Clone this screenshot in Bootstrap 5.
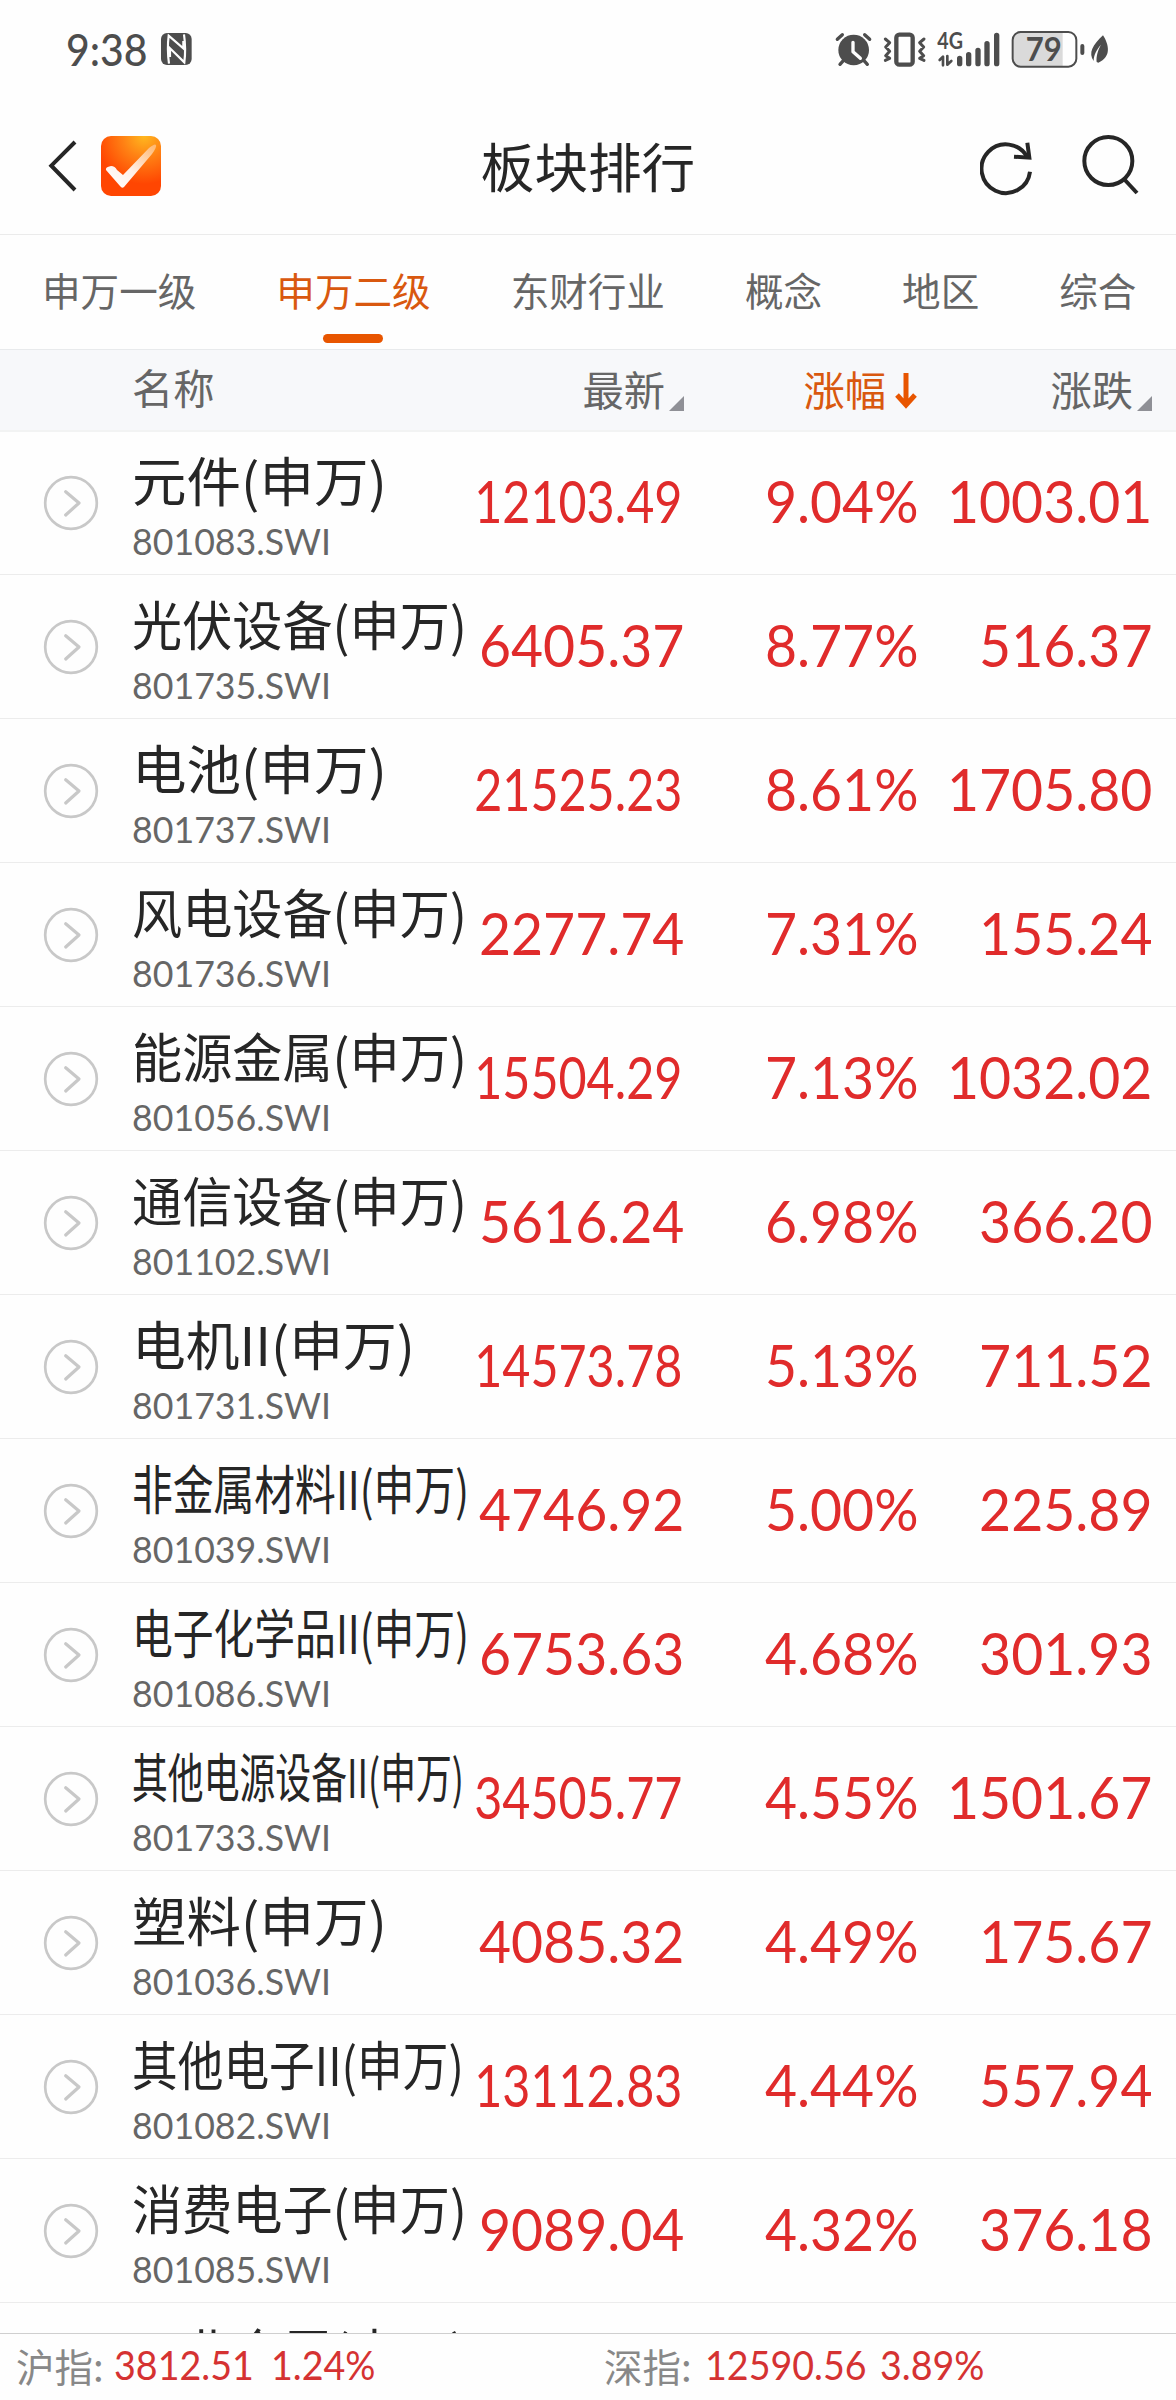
<!DOCTYPE html>
<html lang="zh-CN">
<head>
<meta charset="utf-8">
<meta name="viewport" content="width=device-width, initial-scale=1">
<title>板块排行</title>
<link href="https://cdn.jsdelivr.net/npm/bootstrap@5.3.0/dist/css/bootstrap.min.css" rel="stylesheet">
<style>
  body { background: #fefefe; color: #262626; font-family: "Noto Sans CJK SC", sans-serif; }
  .screen { width: 1176px; height: 2400px; }
  .numeric { font-family: Lato, "Noto Sans", sans-serif; white-space: nowrap; }
  .statusbar { height: 98px; padding: 0 63px 0 66px; color: #4d4d4d; }
  .clock { font-size: 44.5px; line-height: 50px; font-weight: 500; margin-top: 24px; width: 84px; transform: scaleX(.92); transform-origin: left; }
  .nfc { margin: 33px 0 0 11px; }
  .sysicons { margin-top: 30px; }
  .titlebar { height: 137px; border-bottom: 1px solid #ebebeb; }
  .titlebar h1 { font-size: 53.6px; line-height: 60px; padding-top: 37px; font-weight: 400; }
  .tabs { height: 114px; padding-left: 42px; gap: 80px; color: #666; font-size: 38.6px; line-height: 48px; }
  .tabs .tab-link { padding-top: 30px; height: 114px; white-space: nowrap; }
  .tabs .current { color: #d9580f; }
  .tabs .current::after { content: ""; width: 60px; height: 9px; border-radius: 5px; background: #e85500; margin-top: 21px; }
  .colhead { height: 83px; background: #f7f8fa; border-top: 1px solid #e8eaec; border-bottom: 2px solid #f2f3f3; color: #666; font-size: 41.3px; line-height: 50px; }
  .label-text { margin-top: -5px; }
  .col-go { width: 132px; }
  .col-name { width: 345px; }
  .col-last { width: 207px; }
  .col-pct { width: 234px; }
  .col-chg { width: 234px; }
  .sorted { color: #d9580f; }
  .quote-list { margin-top: -1px; min-height: 0; }
  .quote { height: 144px; border-bottom: 1px solid #ececec; }
  .go-icon { margin-left: 43px; }
  .quote-name { font-size: 53px; line-height: 60px; margin-top: 18px; white-space: nowrap; transform-origin: left; }
  .quote-code { font-size: 36px; line-height: 44px; margin-top: 10px; color: #666; transform: scaleX(.992); transform-origin: left; }
  .price { font-size: 58.5px; line-height: 70px; margin-top: -6px; color: #e02b2b; transform: scaleX(.945); transform-origin: right; }
  .price.long { transform: translateX(-2px) scaleX(.828); }
  .indexbar { height: 67px; border-top: 1px solid #cfcfcf; background: #fefefe; font-size: 38.5px; line-height: 62px; color: #888; }
  .indexbar > div { padding-left: 16px; }
  .index-label { width: 98px; }
  .index-label.wide { width: 101px; }
  .index-value { width: 157px; }
  .index-value.wide { width: 175px; }
  .indexbar .numeric { color: #d53232; font-size: 39.8px; transform: scaleX(.945); transform-origin: left; }
</style>
<script src="https://cdn.jsdelivr.net/npm/bootstrap@5.3.0/dist/js/bootstrap.bundle.min.js"></script>
</head>
<body>
<div class="screen d-flex flex-column overflow-hidden">
  <div class="statusbar d-flex align-items-start flex-shrink-0">
    <div class="clock numeric">9:38</div>
    <svg class="nfc" width="31" height="32" viewBox="0 0 93 96">
      <rect width="92" height="96" rx="18" fill="#4d4d4d"/>
      <path d="M24 92C20 64 20 32 23 8L67 46V24M69 4C73 32 73 64 70 88L27 46V72" fill="none" stroke="#fefefe" stroke-width="6.5"/>
    </svg>
    <svg class="sysicons ms-auto" width="280" height="40" viewBox="160 90 840 120">
      <g fill="#4d4d4d" stroke="#4d4d4d" stroke-linecap="round" stroke-linejoin="round">
        <circle cx="222" cy="150" r="46" stroke="none"/>
        <path d="M173 118l15-14M270 118l-15-14" stroke-width="10" fill="none"/>
        <path d="M191 182l-10 11M253 182l10 11" stroke-width="10"/>
        <path d="M220 127v28l22 20" fill="none" stroke="#fefefe" stroke-width="10"/>
        <rect x="350" y="104" width="49" height="90" rx="9" fill="none" stroke-width="13"/>
        <path d="M317 117l13 11-12 13 12 13-12 13 12 8-13 6M433 117l-13 11 12 13-12 13 12 13-12 8 13 6" fill="none" stroke-width="9"/>
        <path d="M480 180l10-10v26M503 168v26l12-11" fill="none" stroke-width="8"/>
        <path d="M540 175v16M567 164v27M595 151v40M622 131v60M651 106v85" fill="none" stroke-width="16"/>
        <path d="M908 138v21" fill="none" stroke-width="12"/>
        <path d="M970 106c18 28 26 65-14 82l-5-2c-2-17 4-37 13-52-13 14-22 31-22 49-17-24-3-48 28-77z" stroke="none"/>
      </g>
      <path d="M717 99h132v99h-132q-16 0-16-18v-63q0-18 16-18z" fill="#dadada"/>
      <rect x="699" y="96" width="191" height="104" rx="24" fill="none" stroke="#4d4d4d" stroke-width="6"/>
      <text x="738" y="183" font-family="Lato" font-weight="700" font-size="96" textLength="108" lengthAdjust="spacingAndGlyphs" fill="#4d4d4d">79</text>
      <text x="473" y="148" font-family="Lato" font-weight="700" font-size="69" textLength="77" lengthAdjust="spacingAndGlyphs" fill="#4d4d4d">4G</text>
    </svg>
  </div>

  <div class="titlebar position-relative flex-shrink-0">
    <h1 class="text-center m-0">板块排行</h1>
    <div class="position-absolute top-0 start-0 w-100 d-flex">
      <svg width="170" height="120" viewBox="0 98 170 120">
        <defs>
          <radialGradient id="logoGlow" cx=".72" cy="0" r=".8"><stop offset="0" stop-color="#ffb81f"/><stop offset=".45" stop-color="#ff8114"/><stop offset="1" stop-color="#ff4602"/></radialGradient>
          <linearGradient id="tickShade" x1="0" y1="1" x2="1" y2="0"><stop offset="0" stop-color="#fff"/><stop offset=".45" stop-color="#fff0e8"/><stop offset="1" stop-color="#ffb56c"/></linearGradient>
        </defs>
        <path d="M75 142L51.3 165.7 75 190" fill="none" stroke="#262626" stroke-width="4"/>
        <rect x="101" y="136" width="60" height="60" rx="10" fill="url(#logoGlow)"/>
        <path d="M106 170q-1-3 5-4 4 0 6 4l6 5L149 148q6-5 7-3 1 2-4 9l-28 33q-2 2-4-1z" fill="url(#tickShade)"/>
      </svg>
      <svg class="ms-auto" width="196" height="120" viewBox="600 294 588 360">
        <g fill="none" stroke="#262626" stroke-width="12">
          <path d="M750 515A73 73 0 1 1 742 472"/>
          <path d="M742 428L748 473 702 470"/>
          <circle cx="985" cy="483" r="72"/>
          <path d="M1032 537l39 42"/>
        </g>
      </svg>
    </div>
  </div>

  <nav class="tabs d-flex flex-shrink-0">
    <div class="tab-link">申万一级</div>
    <div class="tab-link current d-flex flex-column align-items-center">申万二级</div>
    <div class="tab-link">东财行业</div>
    <div class="tab-link">概念</div>
    <div class="tab-link">地区</div>
    <div class="tab-link">综合</div>
  </nav>

  <div class="colhead d-flex align-items-center flex-shrink-0">
    <div class="col-go"></div>
    <div class="col-name"><div style="margin-top:-8px">名称</div></div>
    <div class="col-last d-flex justify-content-end align-items-center"><span class="label-text">最新</span><svg class="ms-1" width="15" height="44" viewBox="0 0 15 44"><path d="M15 28v15H0z" fill="#8f9096"/></svg></div>
    <div class="col-pct sorted d-flex justify-content-end align-items-center"><span class="label-text">涨幅</span><svg class="ms-2" width="24" height="38" viewBox="0 0 24 38"><path d="M12 2v31M3 24l9 10 9-10" fill="none" stroke="#e85500" stroke-width="5"/></svg></div>
    <div class="col-chg d-flex justify-content-end align-items-center"><span class="label-text">涨跌</span><svg class="ms-1" width="15" height="44" viewBox="0 0 15 44"><path d="M15 28v15H0z" fill="#8f9096"/></svg></div>
  </div>

  <main id="quotes" class="quote-list flex-grow-1 overflow-hidden"></main>

  <footer class="indexbar d-flex flex-shrink-0">
    <div class="d-flex w-50"><span class="index-label">沪指:</span><span class="numeric index-value">3812.51</span><span class="numeric">1.24%</span></div>
    <div class="d-flex w-50"><span class="index-label wide">深指:</span><span class="numeric index-value wide">12590.56</span><span class="numeric">3.89%</span></div>
  </footer>
</div>
<script>
  const quotes = [
    ["元件(申万)", "801083", "12103.49", "9.04", "1003.01", 255],
    ["光伏设备(申万)", "801735", "6405.37", "8.77", "516.37", 335],
    ["电池(申万)", "801737", "21525.23", "8.61", "1705.80", 255],
    ["风电设备(申万)", "801736", "2277.74", "7.31", "155.24", 335],
    ["能源金属(申万)", "801056", "15504.29", "7.13", "1032.02", 335],
    ["通信设备(申万)", "801102", "5616.24", "6.98", "366.20", 335],
    ["电机II(申万)", "801731", "14573.78", "5.13", "711.52", 283],
    ["非金属材料II(申万)", "801039", "4746.92", "5.00", "225.89", 337],
    ["电子化学品II(申万)", "801086", "6753.63", "4.68", "301.93", 337],
    ["其他电源设备II(申万)", "801733", "34505.77", "4.55", "1501.67", 332],
    ["塑料(申万)", "801036", "4085.32", "4.49", "175.67", 255],
    ["其他电子II(申万)", "801082", "13112.83", "4.44", "557.94", 332],
    ["消费电子(申万)", "801085", "9089.04", "4.32", "376.18", 335],
    ["工业金属(申万)", "", "", "", "", 335]
  ];
  document.getElementById("quotes").innerHTML = quotes.map(([name, code, last, pct, chg]) => `
    <div class="quote d-flex align-items-center">
      <div class="col-go"><svg class="go-icon d-block" width="56" height="56" viewBox="0 0 56 56" fill="none" stroke="#c8c8c8"><circle cx="28" cy="28" r="25.8" stroke-width="2.7"/><path d="M22.7 16.7L36 28 22.7 40" stroke-width="3.2" stroke-linecap="round" stroke-linejoin="round"/></svg></div>
      <div class="col-name align-self-start d-flex flex-column align-items-start">
        <div class="quote-name">${name}</div>
        <div class="quote-code numeric">${code ? code + ".SWI" : ""}</div>
      </div>
      <div class="col-last d-flex justify-content-end"><span class="price numeric ${last.length > 7 ? "long" : ""}">${last}</span></div>
      <div class="col-pct d-flex justify-content-end"><span class="price numeric">${pct ? pct + "%" : ""}</span></div>
      <div class="col-chg d-flex justify-content-end"><span class="price numeric">${chg}</span></div>
    </div>`).join("");
  document.querySelectorAll(".quote-name").forEach((el, i) => {
    el.style.transform = `scaleX(${quotes[i][5] / el.offsetWidth})`;
  });
</script>
</body>
</html>
